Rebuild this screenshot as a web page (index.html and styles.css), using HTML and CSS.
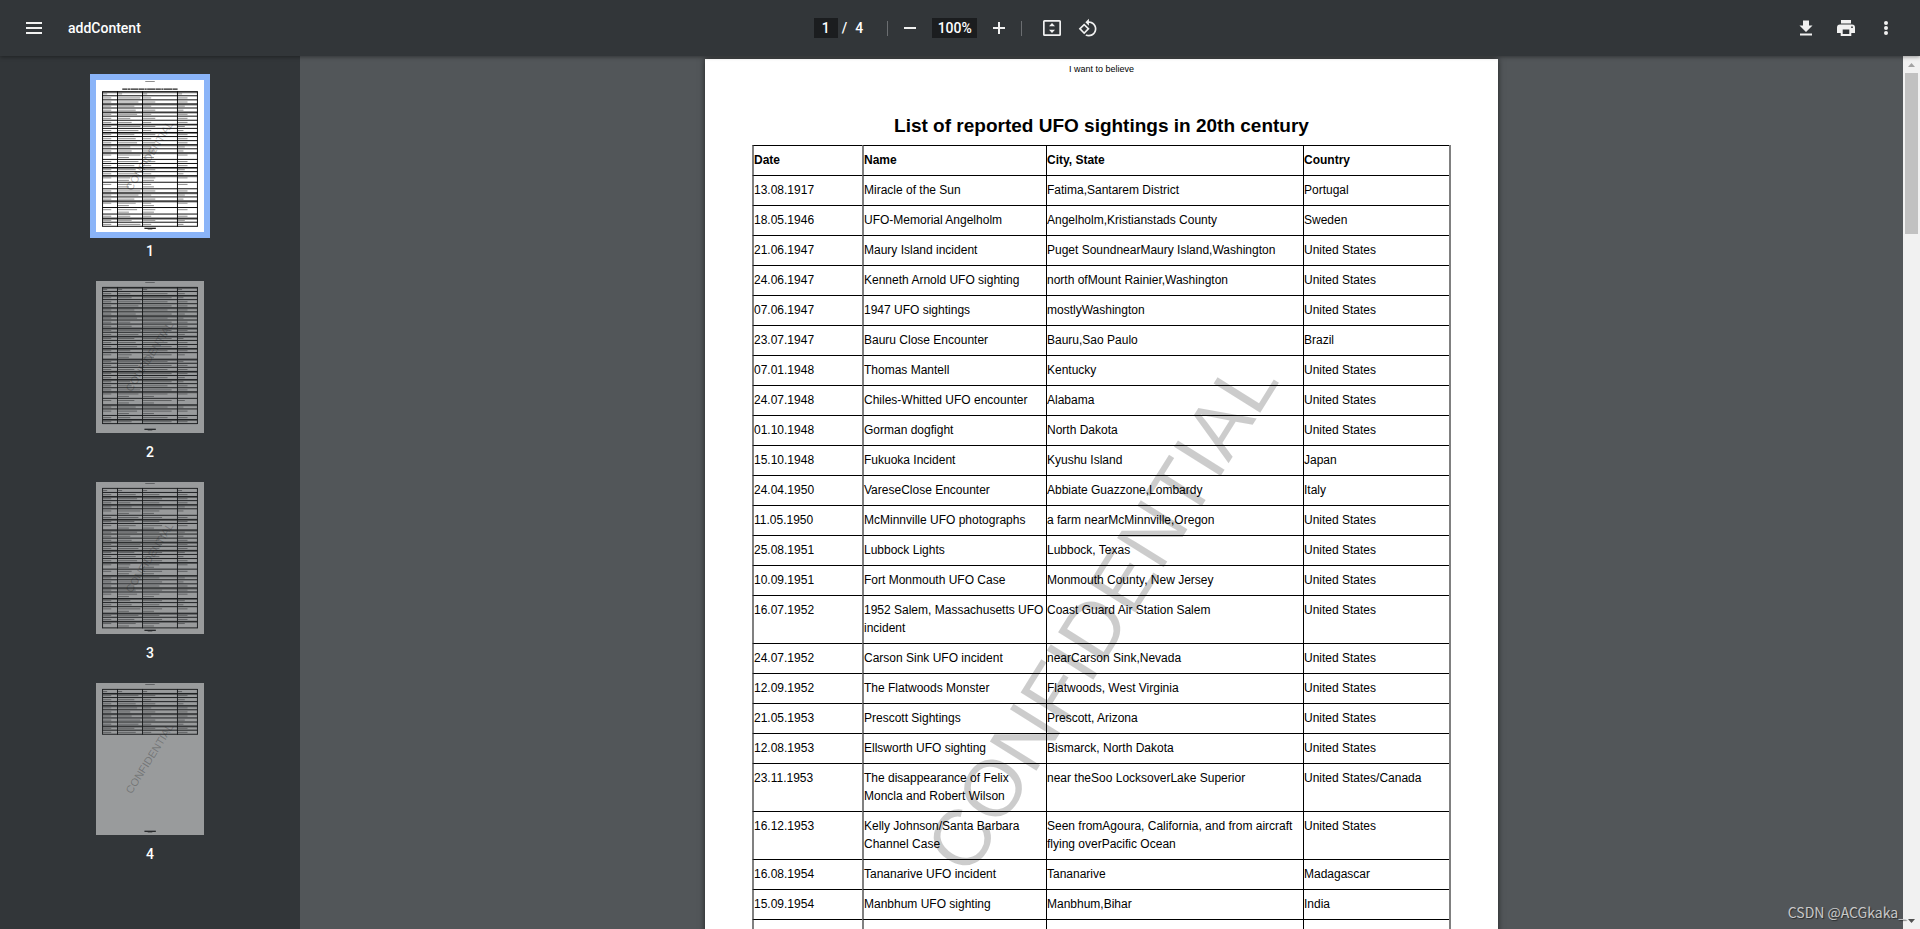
FILE: index.html
```html
<!DOCTYPE html>
<html lang="en">
<head>
<meta charset="utf-8">
<title>addContent</title>
<link rel="stylesheet" href="styles.css">
</head>
<body>
<div class="app">
  <header class="toolbar">
    <div class="toolbar-start">
      <button class="icon-button" aria-label="Menu"><svg width="24" height="24" viewBox="0 0 24 24"><path d="M4 6h16v2H4zM4 11h16v2H4zM4 16h16v2H4z"/></svg></button>
      <h1 class="doc-title">addContent</h1>
    </div>
    <div class="toolbar-center">
      <input class="field field-page" type="text" value="1" aria-label="Page number">
      <span class="page-total"><span>/</span><span>4</span></span>
      <span class="separator"></span>
      <button class="icon-button" aria-label="Zoom out"><svg width="24" height="24" viewBox="0 0 24 24"><path d="M6 11h12v2H6z"/></svg></button>
      <input class="field field-zoom" type="text" value="100%" aria-label="Zoom level">
      <button class="icon-button" aria-label="Zoom in"><svg width="24" height="24" viewBox="0 0 24 24"><path d="M6 11h5V6h2v5h5v2h-5v5h-2v-5H6z"/></svg></button>
      <span class="separator separator-wide"></span>
      <button class="icon-button" aria-label="Fit to page"><svg width="24" height="24" viewBox="0 0 24 24"><path fill-rule="evenodd" d="M4.500 4h15A1.500 1.500 0 0 1 21 5.500v13a1.500 1.500 0 0 1-1.500 1.500h-15A1.500 1.500 0 0 1 3 18.500v-13A1.500 1.500 0 0 1 4.500 4zM4.700 5.700v12.600h14.600V5.700zM12 7l3 3.300H9zM12 17l3-3.300H9z"/></svg></button>
      <button class="icon-button icon-button-last" aria-label="Rotate counterclockwise"><svg width="24" height="24" viewBox="0 0 24 24"><path fill-rule="evenodd" d="M7.340 6.410L.860 12.900l6.490 6.480 6.490-6.480-6.500-6.490zM3.690 12.900l3.660-3.660L11 12.900l-3.660 3.660-3.650-3.660zm15.670-6.260C17.610 4.880 15.300 4 13 4V.760L8.760 5 13 9.240V6c1.790 0 3.580.680 4.950 2.050 2.730 2.730 2.730 7.170 0 9.900C16.580 19.320 14.790 20 13 20c-.970 0-1.940-.210-2.840-.610l-1.490 1.490C10.020 21.620 11.510 22 13 22c2.300 0 4.610-.880 6.360-2.640 3.520-3.510 3.520-9.210 0-12.720z" transform="translate(2 2) scale(.84)"/></svg></button>
    </div>
    <div class="toolbar-end">
      <button class="icon-button" aria-label="Download"><svg width="24" height="24" viewBox="0 0 24 24"><path d="M9 4.500h6v5h3.500L12 16 5.500 9.500H9zM6 17.500h12v2H6z"/></svg></button>
      <button class="icon-button" aria-label="Print"><svg width="24" height="24" viewBox="0 0 24 24"><path fill-rule="evenodd" d="M7 4h10v3.500H7zM6 8.500h12a3 3 0 0 1 3 3V17h-3.700v3H6.700v-3H3v-5.500a3 3 0 0 1 3-3zM8.700 13.500V18h6.600v-4.500zM18 10.300a.9.9 0 1 0 0 1.800.9.9 0 0 0 0-1.800z"/></svg></button>
      <button class="icon-button" aria-label="More actions"><svg width="24" height="24" viewBox="0 0 24 24"><circle cx="12" cy="7" r="2"/><circle cx="12" cy="12" r="2"/><circle cx="12" cy="17" r="2"/></svg></button>
    </div>
  </header>

  <div class="workspace">
    <nav class="sidebar" aria-label="Pages">
      <button class="thumb thumb-current"><span class="thumb-frame"><svg class="thumb-page" viewBox="0 0 794 1118" aria-hidden="true"></svg></span><span class="thumb-label">1</span></button>
      <button class="thumb"><span class="thumb-frame"><svg class="thumb-page" viewBox="0 0 794 1118" aria-hidden="true"></svg></span><span class="thumb-label">2</span></button>
      <button class="thumb"><span class="thumb-frame"><svg class="thumb-page" viewBox="0 0 794 1118" aria-hidden="true"></svg></span><span class="thumb-label">3</span></button>
      <button class="thumb"><span class="thumb-frame"><svg class="thumb-page" viewBox="0 0 794 1118" aria-hidden="true"></svg></span><span class="thumb-label">4</span></button>
    </nav>

    <main class="viewer">
      <article class="page">
        <p class="page-header">I want to believe</p>
        <h2 class="page-title">List of reported UFO sightings in 20th century</h2>
        <table class="sightings">
          <colgroup><col class="col-date"><col class="col-name"><col class="col-city"><col class="col-country"></colgroup>
          <thead>
            <tr><th>Date</th><th>Name</th><th>City, State</th><th>Country</th></tr>
          </thead>
          <tbody>
            <tr><td>13.08.1917</td><td>Miracle of the Sun</td><td>Fatima,Santarem District</td><td>Portugal</td></tr>
            <tr><td>18.05.1946</td><td>UFO-Memorial Angelholm</td><td>Angelholm,Kristianstads County</td><td>Sweden</td></tr>
            <tr><td>21.06.1947</td><td>Maury Island incident</td><td>Puget SoundnearMaury Island,Washington</td><td>United States</td></tr>
            <tr><td>24.06.1947</td><td>Kenneth Arnold UFO sighting</td><td>north ofMount Rainier,Washington</td><td>United States</td></tr>
            <tr><td>07.06.1947</td><td>1947 UFO sightings</td><td>mostlyWashington</td><td>United States</td></tr>
            <tr><td>23.07.1947</td><td>Bauru Close Encounter</td><td>Bauru,Sao Paulo</td><td>Brazil</td></tr>
            <tr><td>07.01.1948</td><td>Thomas Mantell</td><td>Kentucky</td><td>United States</td></tr>
            <tr><td>24.07.1948</td><td>Chiles-Whitted UFO encounter</td><td>Alabama</td><td>United States</td></tr>
            <tr><td>01.10.1948</td><td>Gorman dogfight</td><td>North Dakota</td><td>United States</td></tr>
            <tr><td>15.10.1948</td><td>Fukuoka Incident</td><td>Kyushu Island</td><td>Japan</td></tr>
            <tr><td>24.04.1950</td><td>VareseClose Encounter</td><td>Abbiate Guazzone,Lombardy</td><td>Italy</td></tr>
            <tr><td>11.05.1950</td><td>McMinnville UFO photographs</td><td>a farm nearMcMinnville,Oregon</td><td>United States</td></tr>
            <tr><td>25.08.1951</td><td>Lubbock Lights</td><td>Lubbock, Texas</td><td>United States</td></tr>
            <tr><td>10.09.1951</td><td>Fort Monmouth UFO Case</td><td>Monmouth County, New Jersey</td><td>United States</td></tr>
            <tr><td>16.07.1952</td><td>1952 Salem, Massachusetts UFO incident</td><td>Coast Guard Air Station Salem</td><td>United States</td></tr>
            <tr><td>24.07.1952</td><td>Carson Sink UFO incident</td><td>nearCarson Sink,Nevada</td><td>United States</td></tr>
            <tr><td>12.09.1952</td><td>The Flatwoods Monster</td><td>Flatwoods, West Virginia</td><td>United States</td></tr>
            <tr><td>21.05.1953</td><td>Prescott Sightings</td><td>Prescott, Arizona</td><td>United States</td></tr>
            <tr><td>12.08.1953</td><td>Ellsworth UFO sighting</td><td>Bismarck, North Dakota</td><td>United States</td></tr>
            <tr><td>23.11.1953</td><td>The disappearance of Felix Moncla and Robert Wilson</td><td>near theSoo LocksoverLake Superior</td><td>United States/Canada</td></tr>
            <tr><td>16.12.1953</td><td>Kelly Johnson/Santa Barbara Channel Case</td><td>Seen fromAgoura, California, and from aircraft flying overPacific Ocean</td><td>United States</td></tr>
            <tr><td>16.08.1954</td><td>Tananarive UFO incident</td><td>Tananarive</td><td>Madagascar</td></tr>
            <tr><td>15.09.1954</td><td>Manbhum UFO sighting</td><td>Manbhum,Bihar</td><td>India</td></tr>
            <tr><td>24.07.1956</td><td>Drakensberg Contact</td><td>Drakensberg</td><td>South Africa</td></tr>
          </tbody>
        </table>
        <span class="stamp">CONFIDENTIAL</span>
      </article>
    </main>

    <div class="scrollbar">
      <button class="scroll-arrow scroll-up" aria-label="Scroll up"><svg width="7" height="4" viewBox="0 0 7 4"><path d="M0 4L3.500 0 7 4z"/></svg></button>
      <div class="scroll-track"><div class="scroll-handle"></div></div>
      <button class="scroll-arrow scroll-down" aria-label="Scroll down"><svg width="7" height="4" viewBox="0 0 7 4"><path d="M0 0L3.500 4 7 0z"/></svg></button>
    </div>
  </div>
  <span class="credit">CSDN @ACGkaka_</span>
</div>
<script src="thumbs.js"></script>
</body>
</html>
```
FILE: styles.css
```css
* { box-sizing: border-box; }

body {
  margin: 0;
  font-family: Roboto, "Liberation Sans", sans-serif;
  background: #525659;
}

button {
  padding: 0;
  border: 0;
  background: none;
  font: inherit;
  color: inherit;
}

.app {
  position: relative;
  display: flex;
  flex-direction: column;
  height: 100vh;
  overflow: hidden;
}

/* Toolbar */
.toolbar {
  position: relative;
  z-index: 1;
  display: grid;
  grid-template-columns: 1fr auto 1fr;
  align-items: center;
  flex: none;
  height: 56px;
  padding: 0 18px;
  background: #323639;
  color: #fff;
  box-shadow: 0 1px 4px rgba(0, 0, 0, .4);
}

.toolbar-start,
.toolbar-center,
.toolbar-end {
  display: flex;
  align-items: center;
}

.toolbar-center { padding-right: 2px; }

.toolbar-end {
  justify-content: flex-end;
  gap: 8px;
}

.doc-title {
  margin: 0 0 0 18px;
  font-size: 14px;
  font-weight: 500;
}

.icon-button {
  display: flex;
  align-items: center;
  justify-content: center;
  width: 32px;
  height: 32px;
}

.icon-button svg { fill: #f1f1f1; }

.icon-button-last { margin-left: 4px; }

.field {
  height: 20px;
  padding: 0;
  border: 0;
  background: #1b1d1f;
  color: #fff;
  font: 500 14px Roboto, "Liberation Sans", sans-serif;
  text-align: center;
}

.field-page { width: 24px; }

.field-zoom {
  width: 45px;
  margin: 0 6px;
}

.page-total {
  display: flex;
  gap: 8px;
  margin-left: 4px;
  font-size: 14px;
  font-weight: 500;
}

.separator {
  width: 1px;
  height: 15px;
  margin: 0 6px 0 24px;
  background: #6b6e71;
}

.separator-wide { margin: 0 14px 0 6px; }

/* Workspace */
.workspace {
  display: flex;
  flex: 1;
  min-height: 0;
}

.sidebar {
  display: flex;
  flex-direction: column;
  align-items: center;
  flex: none;
  gap: 16px;
  width: 300px;
  padding-top: 18px;
  background: #323639;
  overflow: hidden;
}

.thumb {
  display: flex;
  flex-direction: column;
  align-items: center;
  flex: none;
  gap: 5px;
  color: #fff;
  font-size: 14px;
  font-weight: 500;
  line-height: 16px;
}

.thumb-frame {
  display: flex;
  border: 6px solid transparent;
}

.thumb-current .thumb-frame { border-color: #8ab4f8; }

.thumb-page {
  width: 108px;
  height: 152px;
  background: #fff;
  opacity: .5;
}

.thumb-current .thumb-page { opacity: 1; }

.thumb-grid {
  fill: none;
  stroke: #000;
  stroke-width: 7;
}

.thumb-smear {
  fill: none;
  stroke: #808080;
  stroke-width: 12;
}

.thumb-text {
  fill: none;
  stroke: #888;
  stroke-width: 7;
}

.thumb-ink {
  fill: none;
  stroke: #222;
  stroke-width: 10;
}

.thumb-stamp {
  font: 80px "Liberation Sans", Arial, sans-serif;
  fill: rgba(0, 0, 0, .3);
  text-anchor: middle;
}

/* Viewer */
.viewer {
  flex: 1;
  min-width: 0;
  padding-top: 3px;
  overflow: hidden;
}

.page {
  position: relative;
  width: 793px;
  min-height: 1123px;
  margin: 0 auto;
  padding: 0 47px;
  background: #fff;
  color: #000;
  font-family: "Liberation Sans", Arial, sans-serif;
  font-size: 12px;
  line-height: 18px;
  box-shadow: 0 0 6px rgba(0, 0, 0, .6);
}

.page-header {
  margin: 0;
  padding-top: 1px;
  font-size: 9px;
  text-align: center;
}

.page-title {
  margin: 0;
  padding: 36px 0 7px;
  font-size: 19px;
  line-height: 24px;
  text-align: center;
}

.sightings {
  width: 100%;
  table-layout: fixed;
  border-collapse: separate;
  border-spacing: 0;
  border-right: 2px solid #808080;
}

.col-date { width: 110px; }
.col-name { width: 184px; }
.col-city { width: 257px; }

.sightings th,
.sightings td {
  padding: 5px 0 6px;
  border-top: 1px solid #000;
  border-left: 1px solid #000;
  text-align: left;
  vertical-align: top;
}

.sightings th:nth-child(-n+2),
.sightings td:nth-child(-n+2) { border-left: 2px solid #808080; }

.stamp {
  position: absolute;
  top: 49.5%;
  left: 50%;
  color: rgba(0, 0, 0, .2);
  font-size: 80px;
  font-kerning: none;
  line-height: 92px;
  white-space: nowrap;
  transform: translate(-50%, -50%) rotate(-58deg);
}

/* Scrollbar */
.scrollbar {
  display: flex;
  flex-direction: column;
  flex: none;
  width: 17px;
  background: #f1f1f1;
}

.scroll-arrow {
  display: flex;
  align-items: center;
  justify-content: center;
  height: 17px;
}

.scroll-up svg { fill: #a3a3a3; }
.scroll-down svg { fill: #505050; }

.scroll-track {
  flex: 1;
  padding: 0 2px;
}

.scroll-handle {
  height: 19.2%;
  background: #c1c1c1;
}

.credit {
  position: absolute;
  right: 14px;
  bottom: 6px;
  z-index: 2;
  color: #c8c8c8;
  font: 14px/22px "Noto Sans CJK SC", "Noto Sans", sans-serif;
  text-shadow: 1px 1px 1px rgba(0, 0, 0, .5);
}
```
FILE: thumbs.js
```js
// Draws the miniature pages. Each digit is the number of text lines in a table row.
const pages = [
  { top: 86, title: true, rows: '1111111111111112111122111' + '22111' },
  { top: 47, rows: '1111111111111111' + '2' + '11111111' + '22' + '1' + '2' + '11' },
  { top: 47, rows: '11111' + '2' + '11' + '2' + '11111111' + '22' + '1111' + '2' + '11' + '2' + '11' + '2' },
  { top: 47, rows: '11111111111' }
];
const columns = [48, 158, 342, 599, 746];
const widths = [[60, 60, 60], [100, 140, 120, 165, 90, 130, 150], [90, 210, 140, 60, 180, 120], [70, 70, 40, 70, 50]];

document.querySelectorAll('.thumb-page').forEach((svg, p) => {
  const { top, title, rows } = pages[p];
  let y = top;
  let lines = '';
  let smear = '';
  let text = '';
  [...rows].forEach((n, r) => {
    if ((r * 7 + p) % 5 < 2) smear += `M48 ${y + 5}H746`;
    lines += `M48 ${y}H746`;
    for (let c = 0; c < 4; c++) {
      const list = r ? widths[c] : [30];
      text += `M${columns[c] + 4} ${y + 16}h${list[(r * 3 + p) % list.length]}`;
      if (n === '2' && (c === 1 || c === 2)) text += `M${columns[c] + 4} ${y + 34}h80`;
    }
    y += n === '2' ? 48 : 30;
  });
  lines += `M48 ${y}H746`;
  columns.forEach(x => { lines += `M${x} ${top - 3}V${y + 3}`; });
  const heading = title ? '<path class="thumb-ink" stroke-dasharray="38 3 16 3 60 3" d="M193 67H600"/>' : '';
  svg.innerHTML = `
    <path class="thumb-text" d="M362 11h70M380 1098h34"/>
    ${heading}
    <path class="thumb-smear" d="${smear}"/>
    <path class="thumb-text" d="${text}"/>
    <path class="thumb-grid" d="${lines}"/>
    <path class="thumb-ink" d="M356 1091h84"/>
    <text class="thumb-stamp" transform="translate(393 556) rotate(-58)" y="28">CONFIDENTIAL</text>`;
});
```
